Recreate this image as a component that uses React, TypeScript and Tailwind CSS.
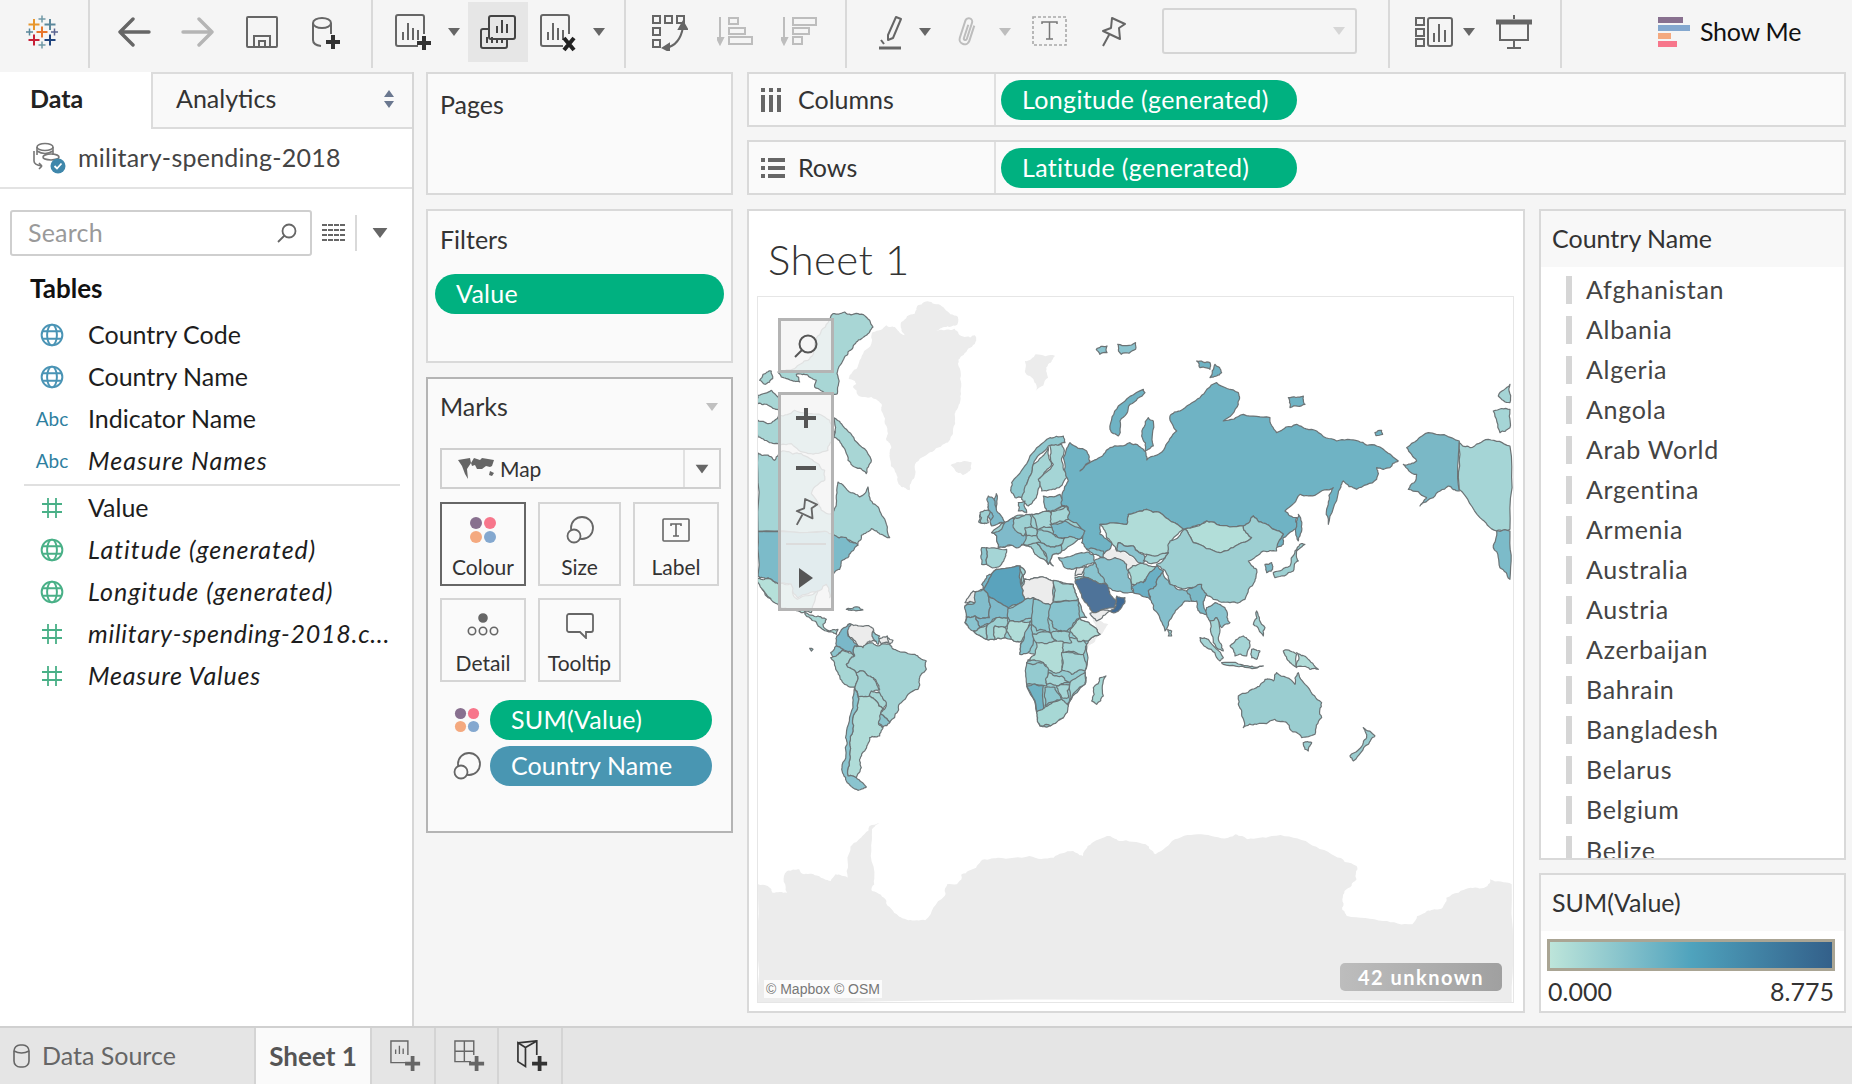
import React from "react";

const FONT = "[font-family:Lato,'Noto_Sans',sans-serif]";

type Poly = [string, string];
const S = "#6c7375";
const G = "#ececec";

const GREY_NORTH: Poly[] = [
  ["275,235 305,190 340,140 345,105 385,85 410,90 430,110 440,115 430,75 470,50 480,25 520,15 560,35 600,60 595,85 560,90 525,105 555,100 590,95 620,120 650,115 655,130 625,165 600,200 610,260 605,320 590,350 585,410 560,440 510,470 470,510 470,540 455,580 430,570 415,530 395,480 400,450 385,430 390,410 375,350 370,320 340,300 300,295 285,270 295,260 272,245", G],
  ["578,505 600,495 640,495 640,515 615,535 595,525", G],
];
const NORTH: Poly[] = [
  ["225,50 260,45 300,50 335,70 345,90 325,115 295,135 270,165 250,200 240,240 238,290 210,290 170,270 175,250 150,235 115,232 125,255 100,250 70,240 60,225 110,215 150,190 170,150 190,100", "#a8d6d5"],
  ["0,295 40,280 60,300 62,340 30,325 0,320", "#a8d6d5"],
  ["15,232 40,222 44,245 22,262 5,250", "#a8d6d5"],
  ["0,370 30,380 62,355 110,340 160,350 215,370 230,420 210,460 150,470 100,440 60,440 20,430 0,420", "#a8d6d5"],
  ["228,362 250,380 290,430 340,490 325,530 290,510 270,490 250,440 228,420", "#a8d6d5"],
  ["0,468 30,474 50,490 80,462 130,470 180,500 200,520 200,550 170,570 160,590 190,640 220,650 235,620 240,555 250,560 290,590 305,600 330,570 345,620 375,660 395,722 370,712 340,695 310,715 298,745 265,730 225,720 200,703 0,703", "#a5d5d6"],
  ["665,655 680,640 690,670 680,680 662,675", "#9fd1d3"],
  ["690,630 715,590 710,650 740,675 700,685", "#7fbaca"],
];
const SOUTH_AM: Poly[] = [
  ["0,-29 200,-29 225,-20 265,-10 300,13 280,32 250,60 245,85 225,100 215,170 205,130 180,150 120,170 100,130 60,130 30,110 0,105", "#7cbbc9"],
  ["5,110 40,175 30,170 5,130", "#b5e0d9"],
  ["0,112 30,112 60,128 100,130 118,175 180,150 160,215 130,215 90,205 60,190 35,170 0,125", "#b5e0d9"],
  ["140,215 180,225 205,235 195,250 215,270 240,265 235,280 205,270 190,262 170,240 145,225", "#a8d8d5"],
  ["265,205 290,198 315,207 280,208", "#8ec7cf"],
  ["155,322 165,325 160,330", "#8ec7cf"],
  ["270,250 305,255 345,262 345,285 360,300 335,300 315,320 300,315 272,285", G],
  ["362,292 388,285 390,305 370,310", G],
  ["388,290 405,298 395,310", G],
  ["345,270 365,285 360,310 345,290", "#8ec7cf"],
  ["235,300 245,275 275,248 280,250 270,285 300,315 290,315 290,345 255,325 235,315", "#7ab8c9"],
  ["218,335 235,315 255,325 235,345 225,355", "#8cc5ce"],
  ["218,350 235,345 255,328 290,345 265,370 295,395 290,440 260,430 240,395", "#a6d6d4"],
  ["265,370 290,345 290,315 315,320 335,305 360,315 395,310 420,330 470,340 505,360 505,385 485,410 480,445 430,485 420,510 395,545 365,520 385,495 365,470 360,430 345,410 315,390 295,395", "#a3d3d4"],
  ["295,395 315,390 345,410 365,445 340,455 335,465 300,465 290,440", "#a3d3d4"],
  ["335,465 340,450 365,455 385,490 375,505 355,480", "#a6d6d4"],
  ["365,520 395,545 375,558 362,548", "#8cc5ce"],
  ["300,468 335,465 355,480 375,505 365,525 362,550 375,560 365,585 335,590 320,630 305,660 310,680 295,710 270,705 275,640 285,570 295,510", "#b0dcd8"],
  ["290,440 300,468 295,510 285,570 275,640 270,705 295,710 325,738 300,748 265,720 252,680 262,620 265,580 285,500", "#8ac4cf"],
];
const BASE_LAND: Poly[] = [
  ["45,555 100,505 140,445 210,435 225,450 222,475 255,470 310,480 370,490 385,535 410,590 390,592 420,610 450,640 415,660 410,670 405,750 405,790 360,840 340,890 300,915 270,915 260,875 230,790 230,725 255,700 210,700 215,660 185,655 165,650 135,655 110,655 80,640 45,605", "#94cbd0"],
  ["125,335 190,290 245,280 300,272 350,255 405,330 385,355 335,390 310,400 295,430 270,385 235,375 220,370 170,375 145,380 140,345", "#9dd0d2"],
];
const GREY_EMEA: Poly[] = [
  ["425,590 475,610 440,650 410,680 440,630", G],
  ["455,395 520,390 565,430 545,445 505,420 465,435", G],
];
const EMEA: Poly[] = [
  ["45,545 70,510 100,505 75,545", G],
  ["215,500 222,475 255,470 310,480 310,555 250,530 225,535", G],
  ["420,577 480,570 440,600", G],
  ["380,440 410,435 395,460 375,465", G],
  ["95,490 110,465 140,445 100,505", "#79b7c8"],
  ["100,505 140,445 210,435 215,500 225,535 175,560 115,525", "#5aa3bd"],
  ["210,435 225,450 222,475 215,490", "#a5d5d6"],
  ["310,478 370,490 385,535 370,545 310,540", "#a5d5d6"],
  ["45,555 75,545 75,515 100,505 115,525 118,590 75,585 50,590", "#82bdcb"],
  ["75,585 118,590 115,525 175,560 175,590 140,590 120,610 90,620", "#7fbaca"],
  ["175,562 225,535 250,530 250,590 215,600 180,600", "#8ac4cf"],
  ["250,535 310,555 295,590 300,635 260,630 245,610", "#8cc6ce"],
  ["310,543 385,540 390,590 365,620 340,630 310,620 295,590", "#88c3ce"],
  ["50,590 75,585 90,620 70,630 45,605", "#8ac4cf"],
  ["70,630 90,620 112,612 110,655 80,640", "#a5d5d6"],
  ["112,612 140,590 175,590 165,620 135,615 135,655 110,655", "#9dd0d2"],
  ["135,615 165,620 165,650 135,655", "#b0dcd8"],
  ["170,630 180,600 215,600 245,600 235,625 215,660 185,655", "#b0dcd8"],
  ["360,630 390,592 420,610 450,640 415,660 385,662", "#b0dcd8"],
  ["300,635 340,630 360,635 365,665 320,660", "#9dd0d2"],
  ["245,640 300,635 320,660 260,665", "#9dd0d2"],
  ["215,665 245,610 250,660 240,690 210,700", "#8ac4cf"],
  ["185,215 185,185 240,105 300,50 340,45 345,65 315,75 295,75 250,130 230,190 215,230 195,230", "#8fc8cf"],
  ["230,190 250,130 295,80 305,130 270,170 260,225 235,255 215,235", "#a5d5d6"],
  ["300,75 335,70 335,120 350,170 315,205 275,210 265,175 310,130", "#a5d5d6"],
  ["205,245 225,240 230,275 205,270", "#8ec7cf"],
  ["115,225 135,240 140,270 165,305 125,315 120,300 130,285 115,255", "#7fbaca"],
  ["90,275 120,270 115,305 90,305", "#9fd1d3"],
  ["125,335 155,325 190,290 225,320 220,370 205,380 170,375 145,380 140,345", "#7fbaca"],
  ["110,380 170,385 165,410 135,440 110,430", "#a5d5d6"],
  ["95,380 110,380 110,430 95,430", "#8ec7cf"],
  ["195,290 240,280 245,320 220,345 190,320", "#9dd0d2"],
  ["245,280 300,272 305,320 260,325", "#a5d5d6"],
  ["215,370 260,365 275,385 310,435 290,420 255,400 235,375", "#9dd0d2"],
  ["225,320 260,325 262,345 230,345", "#9dd0d2"],
  ["262,325 310,340 345,350 335,370 290,375 262,350", "#94cbd0"],
  ["260,365 290,375 335,370 335,390 310,400 295,430 275,385", "#8ec7cf"],
  ["300,310 345,300 405,330 385,355 350,350 310,340", "#7abaca"],
  ["305,270 350,255 355,295 305,310", "#a5d5d6"],
  ["280,225 330,220 335,255 290,270", "#8ac4cf"],
  ["325,410 395,395 430,400 435,425 380,440 340,435", "#8ac4cf"],
  ["410,385 460,390 460,410 430,400", "#8ac4cf"],
  ["405,440 435,425 445,455 470,490 430,480 400,465", "#8ac4cf"],
  ["375,470 400,465 405,470 385,485", "#8ec7cf"],
  ["375,480 405,470 430,480 470,490 480,520 500,540 495,560 430,575 415,555 395,525", "#4e7399"],
  ["500,525 525,530 520,550 495,575 480,570 498,555", "#3f6a95"],
];
const ASIA: Poly[] = [
  ["190,290 210,245 260,270 270,300 240,330 290,295 330,260 390,245 430,265 440,297 495,260 530,210 510,165 540,150 600,110 650,65 715,95 715,130 670,180 730,160 810,170 830,215 890,190 950,210 1010,240 1075,240 1130,255 1195,300 1170,320 1130,320 1130,355 1070,385 1030,360 1015,395 985,490 985,430 1000,380 950,400 900,400 855,450 890,470 895,500 850,530 850,550 820,555 850,520 800,490 760,465 730,495 650,490 620,480 550,505 480,455 440,445 385,460 380,490 300,490 300,520 335,545 310,580 270,570 245,545 250,510 200,470 205,440 180,430 190,390 205,360", "#6fb3c4"],
  ["895,460 905,510 895,540 890,490", "#6fb3c4"],
  ["330,205 355,135 430,85 435,95 390,130 360,180 355,225", "#6fb3c4"],
  ["425,225 445,170 460,180 460,255 435,270", "#6fb3c4"],
  ["865,110 910,105 915,130 870,140", "#6fb3c4"],
  ["590,0 630,5 630,25 600,20", "#6fb3c4"],
  ["630,50 645,10 665,35 650,45", "#6fb3c4"],
  ["1125,215 1145,208 1148,220 1128,224", "#6fb3c4"],
  ["1220,260 1285,215 1378,240 1378,390 1345,375 1300,410 1260,435 1280,410 1225,385 1250,340 1210,310 1250,300", "#7ab8c6"],
  ["1378,245 1410,260 1465,235 1530,255 1530,505 1490,510 1440,470 1378,385", "#a5d5d6"],
  ["1480,150 1530,145 1530,200 1500,215", "#a5d5d6"],
  ["1495,105 1530,70 1530,125", "#a5d5d6"],
  ["1490,510 1530,510 1530,655 1500,620 1480,560", "#7cbbc9"],
  ["300,490 380,490 385,460 440,445 480,455 550,505 510,545 505,575 450,590 440,580 400,555 355,545 350,570 320,530", "#b0dcd8"],
  ["555,505 620,480 650,490 730,495 755,530 700,560 660,575 580,545", "#b2ded9"],
  ["510,540 555,505 580,545 660,575 700,560 755,530 730,495 760,465 800,490 850,520 830,570 790,570 745,600 770,625 765,660 735,715 690,725 640,715 605,680 570,680 510,670 490,625 470,610 505,575", "#9dcfd2"],
  ["280,600 300,590 345,590 380,610 385,650 400,695 360,690 320,675 295,645", "#87c1cd"],
  ["355,545 400,555 440,590 430,610 415,605 370,570 352,570", "#8bc4cf"],
  ["385,625 415,610 440,610 470,615 440,650 430,665 395,670", "#a8d8d5"],
  ["440,580 505,575 470,605 430,600", "#a5d5d6"],
  ["400,695 395,675 430,665 445,640 470,615 490,630 470,670 445,690 450,715 420,700", "#6bb0c5"],
  ["445,690 470,670 490,630 510,670 560,690 600,680 580,720 555,720 520,760 495,810 475,760 455,725", "#85bfcc"],
  ["503,805 515,810 515,825 505,825", "#9dd0d2"],
  ["560,690 605,670 620,700 610,730 625,760 600,755 590,720 575,720", "#7ab8c6"],
  ["620,740 645,725 680,750 690,785 665,800 650,770 630,780", "#8ac4cf"],
  ["630,780 650,770 655,830 670,870 640,845", "#a5d5d6"],
  ["900,550 915,550 890,570 895,600 880,630 825,650 820,635 870,615 885,570", "#9dd0d2"],
  ["795,610 815,605 815,630 800,635", "#7ab8c6"],
  ["600,830 625,835 670,890 660,900 620,860", "#a5d5d6"],
  ["690,855 730,825 750,840 740,885 705,885", "#a5d5d6"],
  ["665,905 745,915 790,915 745,920 670,910", "#a5d5d6"],
  ["755,865 780,870 770,895 755,890", "#a5d5d6"],
  ["850,870 890,880 890,920 870,905", "#b0dcd8"],
  ["890,875 920,890 955,925 930,925 890,918", "#b0dcd8"],
  ["770,750 795,800 790,825 760,790", "#a5d5d6"],
  ["715,1005 770,980 795,955 820,960 830,935 885,970 895,935 925,980 965,1025 965,1070 945,1120 905,1130 870,1105 860,1085 825,1075 770,1090 730,1100 725,1060 715,1030", "#9acdd0"],
  ["910,1145 935,1145 925,1170 915,1165", "#9acdd0"],
  ["1090,1100 1125,1125 1105,1150 1060,1200 1050,1185 1090,1145 1100,1130", "#9acdd0"],
  ["110,835 185,835 190,880 185,930 160,935 130,905 85,900 105,880", "#b2ddd8"],
  ["80,905 130,905 145,935 140,975 80,970", "#94cbd0"],
  ["145,935 185,945 210,965 170,975 140,970", "#a5d5d6"],
  ["185,875 250,880 255,930 215,940 185,925", "#a5d5d6"],
  ["215,830 260,850 250,880 190,875 190,845", "#a5d5d6"],
  ["80,975 130,975 130,1050 110,1050", "#6fb3c4"],
  ["135,980 165,980 185,1015 135,1035", "#8ec7cf"],
  ["170,975 210,970 205,1010 185,1010", "#a5d5d6"],
  ["210,965 255,935 255,970 210,1020 200,1040", "#a5d5d6"],
  ["110,1055 135,1038 185,1015 205,1035 190,1070 150,1095 120,1095", "#a7d8d5"],
  ["300,950 318,945 310,1005 290,1030 275,1020 280,980", "#a7d8d5"],
];
const ARCTIC: Poly[] = [
  ["970,385 1000,375 1000,395 980,400", "#8ac4cf"],
  ["1030,370 1080,365 1080,385 1040,400", "#8ac4cf"],
];
const SVALBARD = "770,420 800,400 855,405 835,430 835,470 800,510 790,470 770,450";
const ANTARCTICA =
  "0,310 20,315 30,335 60,335 60,270 85,265 95,280 125,285 150,300 160,280 185,290 190,210 205,180 230,135 250,125 235,160 240,290 235,330 265,360 290,405 310,418 345,418 385,345 390,310 410,310 420,280 450,260 460,240 495,230 560,225 610,230 650,210 670,225 680,195 720,165 745,180 800,190 820,220 860,175 915,160 970,170 985,160 1010,175 1060,165 1130,180 1190,225 1235,255 1235,295 1210,330 1205,380 1215,405 1290,420 1350,430 1380,390 1405,385 1420,350 1470,320 1505,315 1510,295 1555,310 1555,663 0,663";

type Pt = [number, number];
const hash = (a: number, b: number, c: number) => {
  const v = Math.sin(a * 12.9898 + b * 78.233 + c * 37.719) * 43758.5453;
  return v - Math.floor(v) - 0.5;
};
function wiggle(a: Pt, b: Pt, amp: number, depth: number): Pt[] {
  if (depth === 0) return [];
  const dx = b[0] - a[0];
  const dy = b[1] - a[1];
  const len = Math.hypot(dx, dy) || 1;
  if (len < 6) return [];
  const d = hash(a[0] + b[0], a[1] + b[1], a[0] * b[1] - a[1] * b[0]) * 2 * Math.min(len * 0.16, amp);
  const m: Pt = [(a[0] + b[0]) / 2 - (dy / len) * d, (a[1] + b[1]) / 2 + (dx / len) * d];
  return [...wiggle(a, m, amp / 2, depth - 1), m, ...wiggle(m, b, amp / 2, depth - 1)];
}
// Coast outlines: each edge gets the same irregular path whichever polygon it belongs to.
function rough(points: string): string {
  const pts = points.split(" ").map((p) => p.split(",").map(Number) as Pt);
  const out: Pt[] = [];
  pts.forEach((p, i) => {
    const q = pts[(i + 1) % pts.length];
    out.push(p);
    const swapped = p[0] > q[0] || (p[0] === q[0] && p[1] > q[1]);
    const mid = swapped ? wiggle(q, p, 7, 3).reverse() : wiggle(p, q, 7, 3);
    out.push(...mid);
  });
  return out.map((p) => `${p[0].toFixed(1)},${p[1].toFixed(1)}`).join(" ");
}

function Polys({ items, stroke = true }: { items: Poly[]; stroke?: boolean }) {
  return (
    <>
      {items.map(([points, fill], i) => (
        <polygon
          key={i}
          points={rough(points)}
          fill={fill}
          stroke={stroke ? S : "none"}
          strokeWidth={1.2}
          strokeLinejoin="round"
          vectorEffect="non-scaling-stroke"
        />
      ))}
    </>
  );
}

function WorldMap() {
  return (
    <svg viewBox="758 296 755 705" width="755" height="705" className="block">
      <g transform="translate(758 780) scale(0.4847 0.3333)">
        <polygon points={rough(ANTARCTICA)} fill={G} />
      </g>
      <g transform="translate(750 220) scale(0.357 0.3333)">
        <polygon points={rough(SVALBARD)} fill={G} />
        <Polys items={ARCTIC} />
      </g>
      <g transform="translate(758 296) scale(0.3333)">
        <Polys items={GREY_NORTH} stroke={false} />
        <Polys items={NORTH} />
      </g>
      <g transform="translate(950 420) scale(0.3333)">
        <Polys items={GREY_EMEA} stroke={false} />
      </g>
      <g transform="translate(758 540) scale(0.3333)">
        <Polys items={SOUTH_AM} />
      </g>
      <g transform="translate(950 420) scale(0.3333)">
        <Polys items={BASE_LAND} />
      </g>
      <g transform="translate(1000 360) scale(0.3333)">
        <Polys items={ASIA} />
      </g>
      <g transform="translate(950 420) scale(0.3333)">
        <Polys items={EMEA} />
      </g>
    </svg>
  );
}

const Caret = ({ className = "", color = "#666" }: { className?: string; color?: string }) => (
  <svg width="12" height="8" viewBox="0 0 12 8" className={className}>
    <path d="M0 0H12L6 8Z" fill={color} />
  </svg>
);

const Sep = ({ className }: { className: string }) => <div className={`w-[2px] h-[68px] bg-[#d9d9d9] shrink-0 ${className}`} />;

const Plus = ({ x, y, c = "#333" }: { x: number; y: number; c?: string }) => (
  <path d={`M${x - 7} ${y}H${x + 7}M${x} ${y - 7}V${y + 7}`} stroke={c} strokeWidth="4" fill="none" />
);

function TableauLogo({ className }: { className: string }) {
  const big: [number, number, string][] = [
    [18, 18, "#e8762c"],
    [10, 10.5, "#e8962c"],
    [26, 10.5, "#5b879b"],
    [10, 26, "#c72037"],
    [26, 26, "#1f447e"],
  ];
  const small: [number, number, string][] = [
    [18, 5, "#7099a6"],
    [5.5, 18, "#59879b"],
    [30.5, 18, "#5b6591"],
    [18, 31, "#7099a6"],
  ];
  return (
    <svg width="36" height="36" viewBox="0 0 36 36" className={className} fill="none">
      {big.map(([x, y, c], i) => (
        <path key={i} d={`M${x - 5.5} ${y}H${x + 5.5}M${x} ${y - 5.5}V${y + 5.5}`} stroke={c} strokeWidth="2" />
      ))}
      {small.map(([x, y, c], i) => (
        <path key={i} d={`M${x - 3.5} ${y}H${x + 3.5}M${x} ${y - 3.5}V${y + 3.5}`} stroke={c} strokeWidth="1.5" />
      ))}
    </svg>
  );
}

const Arrow = ({ flip, color, className }: { flip?: boolean; color: string; className: string }) => (
  <svg width="34" height="30" viewBox="0 0 34 30" className={className} fill="none">
    <g transform={flip ? "translate(34 0) scale(-1 1)" : undefined}>
      <path d="M16 2L3 15L16 28M3 15H32" stroke={color} strokeWidth="3.4" strokeLinecap="round" strokeLinejoin="round" />
    </g>
  </svg>
);

const SheetBars = ({ children, className }: { children?: React.ReactNode; className: string }) => (
  <svg width="38" height="38" viewBox="0 0 38 38" className={className} fill="none">
    <path d="M23 32H3a2 2 0 0 1-2-2V3a2 2 0 0 1 2-2H27a2 2 0 0 1 2 2V20" stroke="#666" strokeWidth="2" />
    <path d="M8 26V18M13 26V9M18 26V14M23 26V16" stroke="#666" strokeWidth="2" />
    {children}
  </svg>
);

function PinIcon({ className, w = 27, h = 31 }: { className?: string; w?: number; h?: number }) {
  return (
    <svg width={w} height={h} viewBox="0 0 27 31" className={className} fill="none">
      <path d="M12 2L25 8L19 12L20 23L3 15L11 12Z M9 19L3 30" stroke="#666" strokeWidth="2" strokeLinejoin="round" />
    </svg>
  );
}

function Toolbar() {
  return (
    <div className="h-[72px] shrink-0 flex items-start bg-[#f5f5f5]">
      <TableauLogo className="ml-[24px] mt-[14px]" />
      <Sep className="ml-[28px]" />
      <Arrow color="#666" className="ml-[27px] mt-[17px]" />
      <Arrow flip color="#b5b5b5" className="ml-[30px] mt-[17px]" />
      <svg width="32" height="32" viewBox="0 0 32 32" className="ml-[31px] mt-[16px]" fill="none" stroke="#666" strokeWidth="2">
        <rect x="1" y="1" width="30" height="30" rx="1" />
        <path d="M8 31V20H24V31M13 31V25H19V31" />
      </svg>
      <svg width="30" height="34" viewBox="0 0 30 34" className="ml-[33px] mt-[16px]" fill="none">
        <ellipse cx="11" cy="7" rx="9" ry="5" stroke="#666" strokeWidth="2" />
        <path d="M2 7V24Q2 29 10 30M20 7V18" stroke="#666" strokeWidth="2" />
        <Plus x={22} y={26} />
      </svg>
      <Sep className="ml-[30px]" />
      <SheetBars className="ml-[22px] mt-[14px]">
        <Plus x={29} y={29} />
      </SheetBars>
      <Caret className="ml-[15px] mt-[28px]" />
      <div className="ml-[8px] mt-[2px] w-[60px] h-[60px] bg-[#e6e6e6] flex items-center justify-center shrink-0">
        <svg width="36" height="34" viewBox="0 0 36 34" fill="none" stroke="#444" strokeWidth="2">
          <rect x="9" y="1" width="26" height="23" rx="2" />
          <path d="M17 18V11M22 18V5M27 18V9" />
          <path d="M9 14H3a2 2 0 0 0-2 2V31a2 2 0 0 0 2 2H25a2 2 0 0 0 2-2V24" />
          <path d="M7 28V22M12 28V22M17 28V24M22 28V24" />
        </svg>
      </div>
      <SheetBars className="ml-[12px] mt-[14px]">
        <path d="M24 24L34 36M34 24L24 36" stroke="#222" strokeWidth="4" />
      </SheetBars>
      <Caret className="ml-[15px] mt-[28px]" />
      <Sep className="ml-[19px]" />
      <svg width="36" height="36" viewBox="0 0 36 36" className="ml-[26px] mt-[15px]" fill="none" stroke="#666" strokeWidth="2">
        <rect x="1" y="1" width="7" height="7" />
        <rect x="13" y="1" width="7" height="7" />
        <rect x="25" y="1" width="7" height="7" />
        <rect x="1" y="13" width="7" height="7" />
        <rect x="1" y="25" width="7" height="7" />
        <path d="M14 33Q28 30 31 12" />
        <path d="M27 14L31 7L35 14Z" fill="#666" />
        <path d="M17 29L11 33L17 36Z" fill="#666" />
      </svg>
      <svg width="36" height="30" viewBox="0 0 36 30" className="ml-[29px] mt-[16px]" fill="none" stroke="#bdbdbd" strokeWidth="2">
        <path d="M3 1V26" />
        <path d="M0 22L3 28L6 22Z" fill="#bdbdbd" />
        <rect x="12" y="2" width="9" height="6" />
        <rect x="12" y="12" width="16" height="6" />
        <rect x="12" y="21" width="23" height="7" />
      </svg>
      <svg width="36" height="30" viewBox="0 0 36 30" className="ml-[28px] mt-[16px]" fill="none" stroke="#bdbdbd" strokeWidth="2">
        <path d="M3 1V26" />
        <path d="M0 22L3 28L6 22Z" fill="#bdbdbd" />
        <rect x="12" y="2" width="23" height="7" />
        <rect x="12" y="12" width="16" height="6" />
        <rect x="12" y="21" width="9" height="7" />
      </svg>
      <Sep className="ml-[28px]" />
      <svg width="24" height="36" viewBox="0 0 24 36" className="ml-[32px] mt-[15px]" fill="none">
        <path d="M9 20L17 2L22 4L14 23L9 25Z" stroke="#666" strokeWidth="2" strokeLinejoin="round" />
        <path d="M0 33H22" stroke="#666" strokeWidth="3" />
        <path d="M2 25L5 29" stroke="#666" strokeWidth="2" />
      </svg>
      <Caret className="ml-[16px] mt-[28px]" />
      <svg width="26" height="32" viewBox="0 0 26 32" className="ml-[24px] mt-[16px]" fill="none" stroke="#bdbdbd" strokeWidth="2">
        <g transform="rotate(18 13 16)">
          <path d="M17 8V24a5 5 0 0 1-10 0V6a3.5 3.5 0 0 1 7 0V23a1.5 1.5 0 0 1-3 0V9" />
        </g>
      </svg>
      <Caret color="#bdbdbd" className="ml-[18px] mt-[28px]" />
      <svg width="35" height="30" viewBox="0 0 35 30" className="ml-[21px] mt-[16px]">
        <rect x="1" y="1" width="33" height="28" fill="none" stroke="#a8a8a8" strokeWidth="1.6" strokeDasharray="3 2" />
        <path d="M10 8V6H25V8M17.5 6V23M14 23H21" fill="none" stroke="#777" strokeWidth="1.5" />
      </svg>
      <PinIcon className="ml-[33px] mt-[16px]" />
      <div className="ml-[35px] mt-[8px] w-[195px] h-[46px] border-2 border-[#d5d5d5] rounded-[3px] flex items-center justify-end pr-[10px] shrink-0">
        <Caret color="#d6d6d6" />
      </div>
      <Sep className="ml-[31px]" />
      <svg width="38" height="30" viewBox="0 0 38 30" className="ml-[25px] mt-[17px]" fill="none" stroke="#666" strokeWidth="2">
        <rect x="1" y="1" width="8" height="7" />
        <rect x="1" y="12" width="8" height="7" />
        <rect x="1" y="22" width="8" height="7" />
        <rect x="13" y="1" width="24" height="28" rx="2" />
        <path d="M19 25V16M24 25V7M30 25V13" />
      </svg>
      <Caret className="ml-[10px] mt-[28px]" />
      <svg width="36" height="34" viewBox="0 0 36 34" className="ml-[21px] mt-[15px]" fill="none" stroke="#666" strokeWidth="2">
        <path d="M0 7H36" stroke="#666" strokeWidth="5" />
        <path d="M18 0V4M4 8V25H32V8M18 25V32M11 33H25" />
      </svg>
      <Sep className="ml-[28px]" />
      <div className="ml-[96px] mt-[17px] flex flex-col gap-[2px] shrink-0">
        <div className="w-[25px] h-[6px] bg-[#88708f]" />
        <div className="w-[32px] h-[6px] bg-[#84a8cf]" />
        <div className="w-[13px] h-[6px] bg-[#f4a97f]" />
        <div className="w-[19px] h-[6px] bg-[#f7768b]" />
      </div>
      <div className="ml-[10px] mt-[16px] text-[25px] tracking-[-0.25px] leading-[30px] text-[#111] whitespace-nowrap">Show Me</div>
    </div>
  );
}

const Globe = ({ c }: { c: string }) => (
  <svg width="24" height="24" viewBox="0 0 22 22" fill="none" stroke={c} strokeWidth="1.8">
    <circle cx="11" cy="11" r="9.5" />
    <ellipse cx="11" cy="11" rx="4.5" ry="9.5" />
    <path d="M2 7.5H20M2 14.5H20" />
  </svg>
);
const Hash = () => (
  <svg width="20" height="20" viewBox="0 0 20 20" fill="none" stroke="#49b087" strokeWidth="1.8">
    <path d="M6 0V20M14 0V20M0 6H20M0 14H20" />
  </svg>
);
const Abc = () => <span className="text-[19px] text-[#2f7f9f]">Abc</span>;

function Field({ icon, label, italic, tracking = "" }: { icon: React.ReactNode; label: string; italic?: boolean; tracking?: string }) {
  return (
    <div className="h-[42px] flex items-center">
      <div className="w-[88px] pl-[36px] pr-[20px] flex justify-center shrink-0">{icon}</div>
      <span className={`text-[25px] text-[#1d1d1d] whitespace-nowrap ${italic ? "italic" : ""} ${tracking}`}>{label}</span>
    </div>
  );
}

function Sidebar() {
  return (
    <div className="w-[414px] shrink-0 bg-white border-r-2 border-[#d6d6d6] flex flex-col">
      <div className="h-[57px] flex shrink-0">
        <div className="w-[151px] pl-[30px] pb-[4px] flex items-center font-bold text-[25px] text-[#222]">Data</div>
        <div className="flex-1 pl-[23px] pr-[17px] pb-[3px] flex items-center justify-between bg-[#f9f9f9] border-l-2 border-b-2 border-t-2 border-[#dcdcdc] text-[25px] text-[#333]">
          <span>Analytics</span>
          <svg width="12" height="18" viewBox="0 0 12 18">
            <path d="M6 0L11 7H1ZM6 18L11 11H1Z" fill="#6b7890" />
          </svg>
        </div>
      </div>
      <div className="h-[60px] shrink-0 flex items-center pl-[33px] border-b-2 border-[#e3e3e3]">
        <svg width="33" height="32" viewBox="0 0 33 32" fill="none" stroke="#777" strokeWidth="1.6">
          <ellipse cx="12" cy="5" rx="8" ry="3.5" />
          <path d="M4 5V13M20 5V13" />
          <path d="M4 9Q12 14 20 9" />
          <path d="M1 9V19Q1 23 9 24M9 24L6 21M9 24L6 27" />
          <ellipse cx="18" cy="15" rx="8" ry="3" />
          <circle cx="25" cy="24" r="7.5" fill="#3f87ab" stroke="none" />
          <path d="M21.5 24L24 26.5L28.5 21.5" stroke="#fff" strokeWidth="1.8" />
        </svg>
        <span className="ml-[12px] text-[25px] tracking-[0.25px] text-[#444] whitespace-nowrap">military-spending-2018</span>
      </div>
      <div className="flex items-center pl-[10px] mt-[21px] shrink-0">
        <div className="w-[302px] h-[46px] border-2 border-[#cfcfcf] rounded-[3px] flex items-center justify-between pl-[16px] pr-[13px]">
          <span className="text-[25px] tracking-[0.2px] text-[#9a9a9a]">Search</span>
          <svg width="20" height="20" viewBox="0 0 20 20" fill="none" stroke="#666" strokeWidth="1.8">
            <circle cx="12" cy="8" r="6.5" />
            <path d="M7.5 12.5L1 19" />
          </svg>
        </div>
        <svg width="24" height="18" viewBox="0 0 24 18" className="ml-[10px]" stroke="#666" strokeWidth="2" strokeDasharray="5 1">
          <path d="M0 1H24M0 6H24M0 11H24M0 16H24" />
        </svg>
        <div className="ml-[9px] w-[2px] h-[36px] bg-[#d9d9d9]" />
        <Caret className="ml-[17px] scale-125" />
      </div>
      <div className="pl-[30px] mt-[17px] h-[30px] flex items-center font-bold text-[26px] text-[#111]">Tables</div>
      <div className="mt-[11px]">
        <Field icon={<Globe c="#4a94b5" />} label="Country Code" />
        <Field icon={<Globe c="#4a94b5" />} label="Country Name" />
        <Field icon={<Abc />} label="Indicator Name" />
        <Field icon={<Abc />} label="Measure Names" italic tracking="tracking-[1px]" />
      </div>
      <div className="ml-[24px] w-[376px] h-[2px] bg-[#e0e0e0] mt-[2px] mb-[1px]" />
      <Field icon={<Hash />} label="Value" />
      <Field icon={<Globe c="#49b087" />} label="Latitude (generated)" italic tracking="tracking-[1px]" />
      <Field icon={<Globe c="#49b087" />} label="Longitude (generated)" italic tracking="tracking-[1px]" />
      <Field icon={<Hash />} label="military-spending-2018.c..." italic tracking="tracking-[0.75px]" />
      <Field icon={<Hash />} label="Measure Values" italic tracking="tracking-[0.8px]" />
    </div>
  );
}

const Dots = ({ size = 28 }: { size?: number }) => (
  <svg width={size} height={size} viewBox="0 0 28 28">
    <circle cx="7" cy="7" r="6" fill="#88708f" />
    <circle cx="21" cy="7" r="6" fill="#f7768b" />
    <circle cx="7" cy="21" r="6" fill="#f4a97f" />
    <circle cx="21" cy="21" r="6" fill="#84a8cf" />
  </svg>
);
const SizeIcon = () => (
  <svg width="28" height="28" viewBox="0 0 28 28" fill="none" stroke="#666" strokeWidth="1.8">
    <circle cx="16" cy="12" r="11" />
    <circle cx="8" cy="20" r="6.5" fill="#fafafa" />
  </svg>
);

function Card({ label, children, className }: { label: string; children: React.ReactNode; className: string }) {
  return (
    <div className={`h-[84px] flex flex-col items-center border-2 ${className}`}>
      <div className="h-[50px] flex items-center justify-center pt-[2px]">{children}</div>
      <span className="text-[21px] leading-[26px] text-[#333]">{label}</span>
    </div>
  );
}

function Shelves() {
  const panel = "border-2 border-[#d9d9d9] bg-[#fafafa]";
  return (
    <div className="w-[307px] shrink-0 flex flex-col gap-[14px]">
      <div className={`${panel} h-[123px] px-[12px] pt-[12px] text-[25px] text-[#333]`}>Pages</div>
      <div className={`${panel} h-[154px] flex flex-col`}>
        <div className="h-[63px] px-[12px] pb-[5px] flex items-center text-[25px] text-[#333]">Filters</div>
        <div className="mx-[7px] h-[40px] rounded-full bg-[#00b180] text-white text-[25px] tracking-[0.3px] pl-[21px] flex items-center">Value</div>
      </div>
      <div className="border-2 border-[#b4b4b4] bg-[#fafafa] h-[456px] px-[12px] flex flex-col">
        <div className="h-[56px] flex items-center justify-between text-[25px] text-[#333]">
          <span>Marks</span>
          <Caret color="#c0c0c0" className="mr-[1px]" />
        </div>
        <div className="mt-[13px] h-[41px] border-2 border-[#cfcfcf] flex items-center w-[281px] shrink-0">
          <svg width="36" height="24" viewBox="0 0 36 24" className="ml-[16px]" fill="#666">
            <path d="M0 3L12 1L13 6L9 12L10 22L7 17L4 9Z" />
            <path d="M13 6L16 1L22 3L24 1L36 3L34 9L32 10L28 9L24 12L19 12L17 8L14 9Z" />
            <path d="M32 14L36 16L34 19L31 18Z" />
          </svg>
          <span className="ml-[6px] text-[21px] text-[#333] flex-1">Map</span>
          <div className="w-[36px] h-full border-l-2 border-[#e1e1e1] flex items-center justify-center">
            <Caret className="scale-110" />
          </div>
        </div>
        <div className="mt-[13px] grid grid-cols-[86px_83px_86px] gap-x-[12px] gap-y-[12px] w-[281px] shrink-0">
          <Card label="Colour" className="border-[#666]">
            <Dots />
          </Card>
          <Card label="Size" className="border-[#d5d5d5]">
            <SizeIcon />
          </Card>
          <Card label="Label" className="border-[#d5d5d5]">
            <svg width="28" height="24" viewBox="0 0 28 24" fill="none" stroke="#666" strokeWidth="1.6">
              <rect x="1" y="1" width="26" height="22" rx="1" />
              <path d="M9 8V6H19V8M14 6V18M11 18H17" />
            </svg>
          </Card>
          <Card label="Detail" className="border-[#d5d5d5]">
            <svg width="32" height="26" viewBox="0 0 32 26" fill="none" stroke="#666" strokeWidth="1.6">
              <circle cx="16" cy="5" r="4" fill="#666" />
              <circle cx="5" cy="18" r="3.7" />
              <circle cx="16" cy="18" r="3.7" />
              <circle cx="27" cy="18" r="3.7" />
            </svg>
          </Card>
          <Card label="Tooltip" className="border-[#d5d5d5]">
            <svg width="28" height="26" viewBox="0 0 28 26" fill="none" stroke="#666" strokeWidth="1.8">
              <path d="M3 1H25a2 2 0 0 1 2 2V17a2 2 0 0 1-2 2H20V25L14 19H3a2 2 0 0 1-2-2V3a2 2 0 0 1 2-2Z" />
            </svg>
          </Card>
        </div>
        <div className="mt-[18px] flex items-center pl-[14px]">
          <Dots size={26} />
          <div className="ml-[10px] w-[222px] h-[40px] rounded-full bg-[#00b180] text-white text-[25px] tracking-[0.25px] pl-[21px] flex items-center">SUM(Value)</div>
        </div>
        <div className="mt-[6px] flex items-center pl-[13px]">
          <SizeIcon />
          <div className="ml-[9px] w-[222px] h-[40px] rounded-full bg-[#4996b2] text-white text-[25px] tracking-[0.1px] pl-[21px] flex items-center">Country Name</div>
        </div>
      </div>
    </div>
  );
}

function Shelf({ icon, label, pill }: { icon: React.ReactNode; label: string; pill: string }) {
  return (
    <div className="h-[55px] border-2 border-[#d9d9d9] bg-[#fafafa] flex">
      <div className="w-[247px] border-r-2 border-[#e0e0e0] flex items-center pl-[12px] shrink-0">
        <div className="w-[30px] flex justify-start">{icon}</div>
        <span className="text-[25px] ml-[7px] text-[#333]">{label}</span>
      </div>
      <div className="pl-[5px] flex items-center">
        <div className="w-[296px] h-[40px] rounded-full bg-[#00b180] text-white text-[25px] tracking-[0.35px] pl-[21px] flex items-center">{pill}</div>
      </div>
    </div>
  );
}

const COUNTRIES = [
  "Afghanistan", "Albania", "Algeria", "Angola", "Arab World", "Argentina", "Armenia", "Australia",
  "Austria", "Azerbaijan", "Bahrain", "Bangladesh", "Belarus", "Belgium", "Belize",
];

function MapControls() {
  return (
    <div className="absolute left-[20px] top-[21px] w-[56px] flex flex-col gap-[19px]">
      <div className="h-[55px] border-[3px] border-[#b4b4b4] bg-[#f5f5f5]/85 flex items-center justify-center">
        <svg width="24" height="24" viewBox="0 0 24 24" fill="none" stroke="#555" strokeWidth="2">
          <circle cx="14" cy="10" r="8.5" />
          <path d="M8 16L1 23" />
        </svg>
      </div>
      <div className="h-[219px] border-[3px] border-[#b4b4b4] bg-[#f5f5f5]/85 flex flex-col items-center">
        <svg width="20" height="20" viewBox="0 0 20 20" className="mt-[13px]">
          <path d="M0 10H20M10 0V20" stroke="#555" strokeWidth="4" />
        </svg>
        <div className="mt-[38px] w-[20px] h-[4px] bg-[#555]" />
        <PinIcon className="mt-[27px]" w={25} h={29} />
        <div className="mt-[17px] w-[40px] h-[2px] bg-[#dcdcdc]" />
        <svg width="14" height="20" viewBox="0 0 14 20" className="mt-[23px]">
          <path d="M0 0L14 10L0 20Z" fill="#555" />
        </svg>
      </div>
    </div>
  );
}

function ViewAndCards() {
  return (
    <div className="flex gap-[14px] flex-1 min-h-0 mt-[1px]">
      <div className="w-[778px] h-[804px] shrink-0 border-2 border-[#d9d9d9] bg-white pl-[9px] flex flex-col">
        <div className="h-[85px] shrink-0 pt-[22px] pl-[10px] text-[42px] tracking-[0.4px] leading-[52px] font-light text-[#333]">Sheet 1</div>
        <div className="relative w-[755px] h-[705px] shrink-0 border border-[#e6e6e6] box-content -ml-[1px]">
          <WorldMap />
          <MapControls />
          <div className="absolute left-[6px] bottom-[4px] h-[18px] px-[2px] bg-white/80 text-[14px] leading-[18px] text-[#777] [font-family:'Liberation_Sans',sans-serif]">© Mapbox © OSM</div>
          <div className="absolute right-[11px] bottom-[11px] w-[162px] h-[28px] rounded-[5px] bg-gradient-to-r from-[#bdbdbd] to-[#a0a0a0] text-white font-bold text-[20px] tracking-[1.5px] flex items-center justify-center">42 unknown</div>
        </div>
      </div>
      <div className="w-[307px] shrink-0 flex flex-col gap-[13px]">
        <div className="h-[651px] shrink-0 border-2 border-[#d9d9d9] bg-white flex flex-col overflow-hidden">
          <div className="h-[56px] shrink-0 bg-[#f8f8f8] pl-[11px] flex items-center text-[25px] text-[#333]">Country Name</div>
          <div className="pt-[3px]">
            {COUNTRIES.map((c, i) => (
              <div key={c} className="h-[40px] flex items-center">
                <div className="ml-[25px] w-[6px] h-[28px] bg-[#d6d6d6] shrink-0" />
                <span className={`ml-[14px] text-[25px] tracking-[0.7px] text-[#444] whitespace-nowrap ${i === 14 ? "leading-[28px] -mt-[1px]" : ""}`}>{c}</span>
              </div>
            ))}
          </div>
        </div>
        <div className="h-[140px] shrink-0 border-2 border-[#d9d9d9] bg-white flex flex-col">
          <div className="h-[56px] shrink-0 bg-[#f9f9f9] pl-[11px] flex items-center text-[25px] text-[#333]">SUM(Value)</div>
          <div className="ml-[6px] w-[288px] mt-[8px] h-[32px] shrink-0 border-[3px] border-[#aaa594] bg-gradient-to-r from-[#bde5da] via-[#4fa3bd] to-[#33608a]" />
          <div className="ml-[7px] mr-[10px] mt-[4px] flex justify-between text-[25px] leading-[32px] text-[#333]">
            <span>0.000</span>
            <span>8.775</span>
          </div>
        </div>
      </div>
    </div>
  );
}

function BottomBar() {
  return (
    <div className="h-[58px] shrink-0 bg-[#e5e5e5] border-t-2 border-[#d0d0d0] flex">
      <div className="w-[254px] pl-[13px] flex items-center text-[25px] text-[#666] shrink-0">
        <svg width="17" height="24" viewBox="0 0 17 24" fill="none" stroke="#666" strokeWidth="1.6">
          <rect x="1" y="1" width="15" height="22" rx="6" />
          <path d="M1 7Q8.5 11 16 7" />
        </svg>
        <span className="ml-[12px]">Data Source</span>
      </div>
      <div className="w-[118px] bg-[#fafafa] border-l-2 border-r-2 border-[#d4d4d4] flex items-center justify-center font-bold text-[26px] text-[#555] shrink-0">Sheet 1</div>
      {[
        <g key="a">
          <path d="M18 24H1V1H19V16" stroke="#666" strokeWidth="1.5" fill="none" />
          <path d="M6 15V10M10 15V6M14 15V9" stroke="#666" strokeWidth="1.4" />
        </g>,
        <g key="b">
          <path d="M18 23H1V1H21V16M11 1V23M1 12H21" stroke="#666" strokeWidth="1.5" fill="none" />
        </g>,
        <g key="c">
          <path d="M1 3L9 8V28L1 23ZM9 8L21 1V16" stroke="#333" strokeWidth="1.8" fill="none" />
          <path d="M1 3L21 1" stroke="#333" strokeWidth="1.8" fill="none" />
        </g>,
      ].map((g, i) => (
        <div key={i} className="w-[63.5px] pl-[7px] border-r-2 border-[#d4d4d4] flex items-center justify-center shrink-0">
          <svg width="32" height="32" viewBox="0 0 34 34">
            {g}
            <path d="M16 25H32M24 17V33" stroke={i === 2 ? "#333" : "#666"} strokeWidth="4" />
          </svg>
        </div>
      ))}
    </div>
  );
}

export default function App() {
  return (
    <div className={`w-[1852px] h-[1084px] flex flex-col bg-[#f5f5f5] overflow-hidden ${FONT}`}>
      <Toolbar />
      <div className="flex-1 min-h-0 flex">
        <Sidebar />
        <div className="pl-[12px] flex gap-[14px]">
          <Shelves />
          <div className="w-[1099px] shrink-0 flex flex-col gap-[13px]">
            <Shelf
              label="Columns"
              pill="Longitude (generated)"
              icon={
                <svg width="20" height="24" viewBox="0 0 20 24" fill="#666">
                  <rect x="0" y="7" width="4" height="17" />
                  <rect x="8" y="7" width="4" height="17" />
                  <rect x="16" y="7" width="4" height="17" />
                  <rect x="0" y="0" width="4" height="4" />
                  <rect x="8" y="0" width="4" height="4" />
                  <rect x="16" y="0" width="4" height="4" />
                </svg>
              }
            />
            <Shelf
              label="Rows"
              pill="Latitude (generated)"
              icon={
                <svg width="24" height="20" viewBox="0 0 24 20" fill="#666">
                  <rect x="0" y="0" width="4" height="4" />
                  <rect x="0" y="8" width="4" height="4" />
                  <rect x="0" y="16" width="4" height="4" />
                  <rect x="7" y="0" width="17" height="4" />
                  <rect x="7" y="8" width="17" height="4" />
                  <rect x="7" y="16" width="17" height="4" />
                </svg>
              }
            />
            <ViewAndCards />
          </div>
        </div>
      </div>
      <BottomBar />
    </div>
  );
}
